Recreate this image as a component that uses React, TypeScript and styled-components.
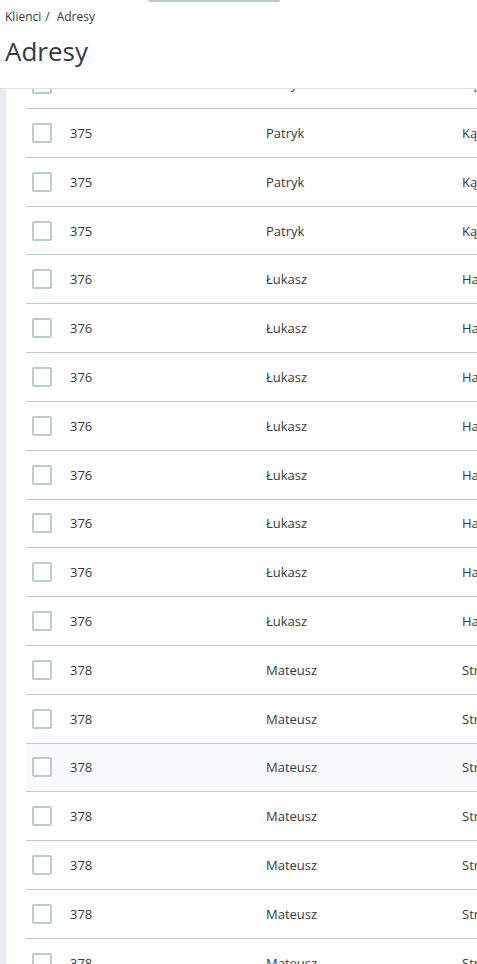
import React from "react";
import styled, { createGlobalStyle } from "styled-components";

const rows = [
  ...Array(4).fill({ id: 375, name: "Patryk", city: "Kątowa 14" }),
  ...Array(8).fill({ id: 376, name: "Łukasz", city: "Hallera 3" }),
  ...Array(7).fill({ id: 378, name: "Mateusz", city: "Strzelecka 21" }),
];

const hoveredRow = 14;

const App = () => {
  return (
    <Page>
      <GlobalStyle />
      <Header>
        <Nub />
        <Breadcrumb>
          <span>Klienci</span>
          <Slash>/</Slash>
          <span>Adresy</span>
        </Breadcrumb>
        <Title>Adresy</Title>
      </Header>
      <Body>
        <Strip />
        <Content>
          <Table>
            {rows.map((row, i) => (
              <Row key={i} $active={i === hoveredRow}>
                <CheckCell>
                  <Check type="checkbox" />
                </CheckCell>
                <Cell>{row.id}</Cell>
                <Cell>{row.name}</Cell>
                <Cell>{row.city}</Cell>
              </Row>
            ))}
          </Table>
        </Content>
      </Body>
    </Page>
  );
};

export default App;

const GlobalStyle = createGlobalStyle`
  html, body {
    margin: 0;
    padding: 0;
    overflow: hidden;
    background: #fff;
  }
  * {
    box-sizing: border-box;
  }
`;

const Page = styled.div`
  display: flex;
  flex-direction: column;
  width: 477px;
  height: 964px;
  overflow: hidden;
  font-family: "Open Sans", "Noto Sans", sans-serif;
  color: #363a41;
`;

const Header = styled.header`
  flex: none;
  height: 89px;
  padding: 0 5px;
  background: #fff;
  border-bottom: 1px solid #dfe3e6;
`;

const Nub = styled.div`
  width: 132px;
  height: 2px;
  margin-left: 143px;
  background: #bbcdd2;
  border-radius: 0 0 6px 6px;
`;

const Breadcrumb = styled.div`
  margin-top: 7px;
  font-size: 12px;
  line-height: 16px;
  display: flex;
`;

const Slash = styled.span`
  margin: 0 7px 0 4px;
`;

const Title = styled.h1`
  margin: 10px 0 0;
  font-size: 26px;
  font-weight: 400;
  line-height: 32px;
`;

const Body = styled.div`
  flex: 1;
  display: flex;
  overflow: hidden;
`;

const Strip = styled.div`
  flex: none;
  width: 6px;
  background: #eaedef;
`;

const Content = styled.div`
  flex: 1;
  padding-left: 20px;
  overflow: hidden;
`;

const Table = styled.div`
  margin-top: -28.82px;
  width: 560px;
`;

const Row = styled.div<{ $active: boolean }>`
  display: grid;
  grid-template-columns: 44px 196px 196px 1fr;
  align-items: center;
  height: 48.82px;
  border-bottom: 1px solid #bbcdd2;
  background: ${(p) => (p.$active ? "#f8fafb" : "#fff")};
  font-size: 13px;
`;

const CheckCell = styled.div`
  padding-left: 6px;
  display: flex;
  align-items: center;
`;

const Check = styled.input`
  appearance: none;
  margin: 0;
  width: 20px;
  height: 20px;
  border: 2px solid #bbcdd2;
  border-radius: 2px;
  background: #fff;
`;

const Cell = styled.div`
  white-space: nowrap;
  line-height: 18px;
`;
